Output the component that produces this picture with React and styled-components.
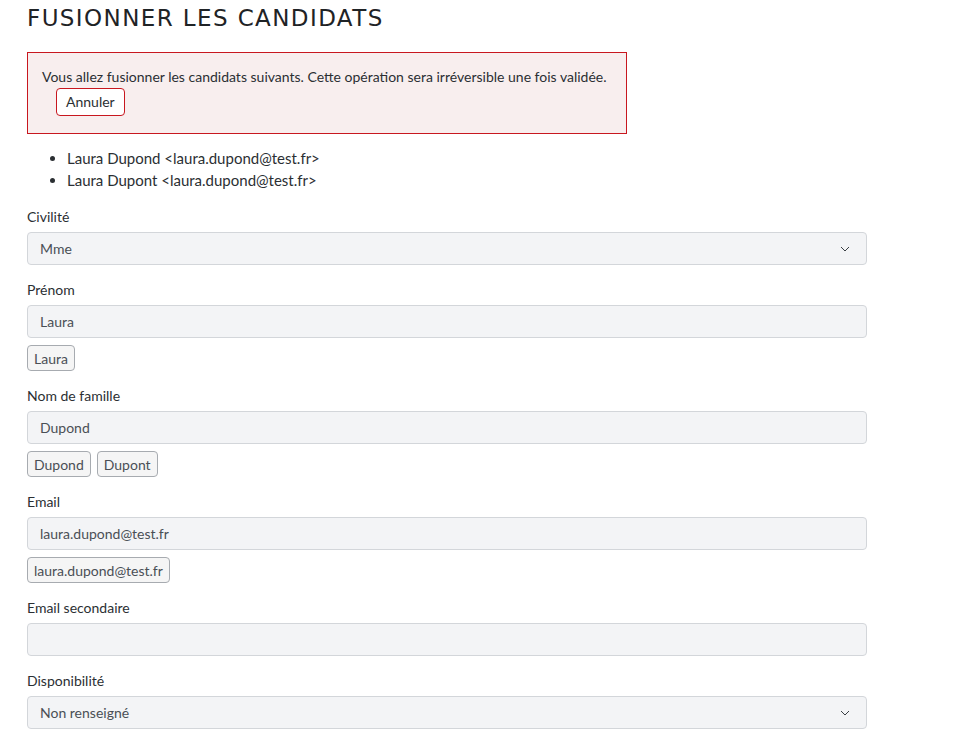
import React from "react";
import styled, { createGlobalStyle } from "styled-components";

const GlobalStyle = createGlobalStyle`
  body {
    margin: 0;
    background: #ffffff;
    font-family: Lato, "Liberation Sans", sans-serif;
    font-size: 14px;
    color: #2b2f33;
  }
`;

const Page = styled.div`
  padding: 0 27px;
  width: 840px;
`;

const Title = styled.h1`
  margin: 0;
  padding-top: 3px;
  font-family: "DejaVu Sans", "Open Sans", sans-serif;
  font-size: 23px;
  line-height: 31px;
  font-weight: 400;
  letter-spacing: 1.4px;
  text-transform: uppercase;
  color: #1f2326;
`;

const Alert = styled.div`
  margin-top: 18px;
  width: 600px;
  box-sizing: border-box;
  padding: 14px 14px 17px;
  background: #f8eeee;
  border: 1px solid #c8171f;
  line-height: 20px;
  color: #2b2f33;
`;

const CancelButton = styled.button`
  display: block;
  margin: 1px 0 0 14px;
  height: 28px;
  padding: 0 9px;
  background: #ffffff;
  border: 1px solid #c8171f;
  border-radius: 4px;
  font-family: inherit;
  font-size: 14px;
  line-height: 20px;
  color: #2b2f33;
`;

const CandidateList = styled.ul`
  margin: 13px 0 16px;
  padding-left: 40px;
  font-size: 15px;
  line-height: 22px;
`;

const Field = styled.div`
  margin-bottom: 15px;
`;

const Label = styled.label`
  display: block;
  line-height: 20px;
  margin-bottom: 5px;
`;

const Control = styled.div`
  display: flex;
  align-items: center;
  justify-content: space-between;
  height: 33px;
  box-sizing: border-box;
  padding: 0 16px 0 12px;
  background: #f3f4f6;
  border: 1px solid #d3d6da;
  border-radius: 4px;
  color: #4a4f55;
`;

const Chips = styled.div`
  display: flex;
  gap: 6px;
  margin-top: 7px;
`;

const Chip = styled.span`
  height: 26px;
  box-sizing: border-box;
  padding: 0 6px;
  display: inline-flex;
  align-items: center;
  background: #f5f5f5;
  border: 1px solid #a7abb0;
  border-radius: 4px;
  color: #4a4f55;
`;

const Chevron = () => (
  <svg width="10" height="6" viewBox="0 0 10 6" fill="none">
    <path d="M1 1l4 4 4-4" stroke="#3a3f44" strokeWidth="1" />
  </svg>
);

const fields = [
  { label: "Civilité", value: "Mme", select: true },
  { label: "Prénom", value: "Laura", chips: ["Laura"] },
  { label: "Nom de famille", value: "Dupond", chips: ["Dupond", "Dupont"] },
  { label: "Email", value: "laura.dupond@test.fr", chips: ["laura.dupond@test.fr"] },
  { label: "Email secondaire", value: "" },
  { label: "Disponibilité", value: "Non renseigné", select: true },
];

const App = () => {
  return (
    <Page>
      <GlobalStyle />
      <Title>Fusionner les candidats</Title>
      <Alert>
        Vous allez fusionner les candidats suivants. Cette opération sera irréversible une fois validée.
        <CancelButton>Annuler</CancelButton>
      </Alert>
      <CandidateList>
        <li>Laura Dupond &lt;laura.dupond@test.fr&gt;</li>
        <li>Laura Dupont &lt;laura.dupond@test.fr&gt;</li>
      </CandidateList>
      {fields.map((f) => (
        <Field key={f.label}>
          <Label>{f.label}</Label>
          <Control>
            <span>{f.value}</span>
            {f.select && <Chevron />}
          </Control>
          {f.chips && (
            <Chips>
              {f.chips.map((c) => (
                <Chip key={c}>{c}</Chip>
              ))}
            </Chips>
          )}
        </Field>
      ))}
    </Page>
  );
};

export default App;
